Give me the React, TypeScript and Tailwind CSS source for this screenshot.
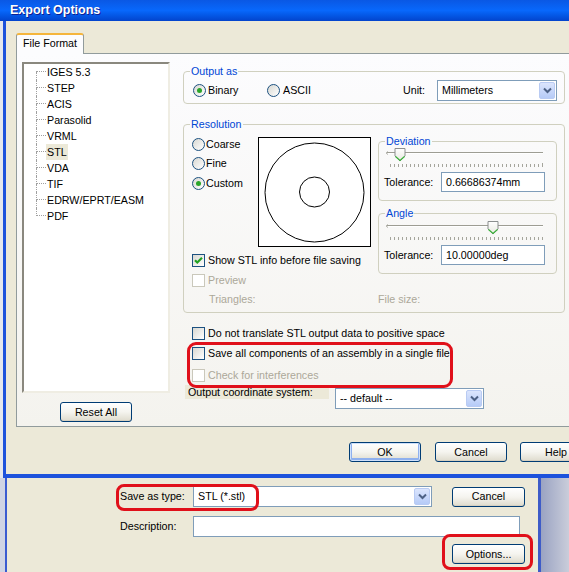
import React from "react";

function Radio({ checked }: { checked?: boolean }) {
  return (
    <span className="w-[13px] h-[13px] shrink-0 rounded-full border border-[#1c5180] bg-gradient-to-br from-[#d8d8d2] to-white flex items-center justify-center">
      {checked && <span className="w-[5px] h-[5px] rounded-full bg-[#2aa52a]" />}
    </span>
  );
}

function Check({ checked, disabled }: { checked?: boolean; disabled?: boolean }) {
  if (disabled) return <span className="w-[13px] h-[13px] shrink-0 border border-[#cac8bb] bg-white" />;
  return (
    <span className="w-[13px] h-[13px] shrink-0 border border-[#1c5180] bg-gradient-to-br from-[#d8d8d2] to-white flex items-center justify-center">
      {checked && (
        <svg width="11" height="11" viewBox="0 0 11 11">
          <path d="M2 5.2 L4.3 7.5 L9 2.8" stroke="#21a121" strokeWidth="2.2" fill="none" />
        </svg>
      )}
    </span>
  );
}

function Btn({ children, wide, def }: { children: React.ReactNode; wide?: boolean; def?: boolean }) {
  return (
    <div
      className={`${wide ? "w-[73px]" : "w-[72px]"} h-[20px] shrink-0 rounded-[3px] border border-[#003c74] bg-gradient-to-b from-white via-[#f5f4ef] to-[#dedbcd] flex items-center justify-center ${def ? "shadow-[inset_0_0_0_1px_#cee0fb,inset_0_-1px_0_2px_#8fb0ee]" : "shadow-[inset_0_-1px_0_0_#d6d0c0]"}`}
    >
      {children}
    </div>
  );
}

function DropBtn() {
  return (
    <span className="w-[16px] h-[17px] shrink-0 rounded-[2px] border border-[#b9cbf3] bg-gradient-to-b from-[#dbe5fd] to-[#b6cbf7] flex items-center justify-center">
      <svg width="9" height="7" viewBox="0 0 9 7">
        <path d="M1 1.5 L4.5 5 L8 1.5" stroke="#4d6185" strokeWidth="2" fill="none" />
      </svg>
    </span>
  );
}

function Select({ value, cls }: { value: string; cls: string }) {
  return (
    <div className={`h-[21px] shrink-0 border border-[#7f9db9] bg-white flex items-center justify-between pl-[4px] pr-[1px] ${cls}`}>
      <span className="leading-[13px]">{value}</span>
      <DropBtn />
    </div>
  );
}

function Slider({ pos, bigLast }: { pos: number; bigLast?: boolean }) {
  const ticks = Array.from({ length: 39 }, (_, i) => 6.5 + i * 4);
  return (
    <svg width="164" height="22" viewBox="0 0 164 22" className="block">
      <path d="M3 5.5 H159" stroke="#9d9d93" strokeWidth="1" />
      <path d="M3 6.5 H159" stroke="#ffffff" strokeWidth="1" />
      <path d="M3.5 4.5 Q1.5 6 3.5 7.5" stroke="#9d9d93" fill="none" />
      {ticks.map((x, i) => (
        <rect key={i} x={x - 0.5} y={bigLast && i === ticks.length - 1 ? 16 : 17} width="1" height={bigLast && i === ticks.length - 1 ? 4 : 3} fill="#a5a59c" />
      ))}
      <defs>
        <linearGradient id="th" x1="0" y1="0" x2="0" y2="1">
          <stop offset="0" stopColor="#ffffff" />
          <stop offset="1" stopColor="#e8e8e0" />
        </linearGradient>
      </defs>
      <path d={`M${pos - 5} 1.5 H${pos + 5} V9 L${pos} 14 L${pos - 5} 9 Z`} fill="url(#th)" stroke="#8b8e8e" strokeWidth="1" />
      <path d={`M${pos - 4.5} 9.5 L${pos} 13.5 L${pos + 4.5} 9.5`} stroke="#3cb03c" strokeWidth="1.2" fill="none" />
    </svg>
  );
}

function TreeRow({ label, first, last, sel }: { label: string; first?: boolean; last?: boolean; sel?: boolean }) {
  return (
    <div className="h-[16px] flex items-stretch">
      <div className="ml-[12px] w-[10px] flex flex-col">
        <div className={`h-[8px] border-b border-dotted border-b-[#a0a0a0] ${first ? "" : "border-l border-l-[#a0a0a0]"}`} />
        <div className={`h-[8px] ${last ? "" : "border-l border-dotted border-l-[#a0a0a0]"}`} />
      </div>
      <div className="flex items-center">
        <span className={`px-[1px] leading-[16px] ${sel ? "bg-[#ece9d8]" : ""}`}>{label}</span>
      </div>
    </div>
  );
}

function Legend({ children }: { children: React.ReactNode }) {
  return <legend className="ml-[6px] px-[1px] leading-[13px] text-[#0046d5]">{children}</legend>;
}

export default function App() {
  const tree = ["IGES 5.3", "STEP", "ACIS", "Parasolid", "VRML", "STL", "VDA", "TIF", "EDRW/EPRT/EASM", "PDF"];
  return (
    <div className="relative w-[569px] h-[572px] overflow-hidden flex flex-col text-[10.7px] leading-[13px] text-black font-['Liberation_Sans',Arial,sans-serif]">
      {/* Export Options window */}
      <div className="h-[478px] shrink-0 flex flex-col">
        <div className="h-[21px] shrink-0 bg-gradient-to-b from-[#0a58e4] via-[#0868fc] to-[#0344cc] flex items-center pl-[10px] text-white font-bold text-[12.5px] [text-shadow:1px_1px_0_#0f2090]">
          Export Options
        </div>
        <div className="flex flex-1 min-h-0">
          <div className="w-[3px] bg-[#e4e7ee]" />
          <div className="flex-1 min-w-0 border-l-[3px] border-b-[4px] border-[#1d52dc] bg-[#ece9d8] pl-[10px] pt-[12px] flex flex-col">
            {/* tab header */}
            <div className="w-[68px] h-[21px] -mb-px relative z-10 rounded-t-[3px] border border-b-0 border-[#919b9c] border-t-[2px] border-t-[#f5b53c] bg-[#fcfcfe] pl-[6px] pt-[2px]">
              File Format
            </div>
            {/* tab panel */}
            <div className="h-[374px] -mr-[20px] border border-[#919b9c] bg-gradient-to-b from-[#fcfcfe] to-[#f4f3ee] flex">
              {/* left column */}
              <div className="ml-[5px] mt-[8px] w-[148px] flex flex-col">
                <div className="h-[331px] bg-white border-2 border-t-[#8a887e] border-l-[#8a887e] border-r-[#efede3] border-b-[#efede3]">
                  {tree.map((t, i) => (
                    <TreeRow key={t} label={t} first={i === 0} last={i === tree.length - 1} sel={t === "STL"} />
                  ))}
                </div>
                <div className="mt-[9px] ml-[38px]">
                  <Btn>Reset All</Btn>
                </div>
              </div>
              {/* right column */}
              <div className="ml-[13px] w-[382px] pt-[11px] flex flex-col">
                <fieldset className="border border-[#d0d0bf] rounded-[4px]">
                  <Legend>Output as</Legend>
                  <div className="mt-[2px] mb-[2px] h-[21px] pl-[9px] flex items-center">
                    <div className="w-[74px] flex items-center gap-[2px]">
                      <Radio checked />
                      <span>Binary</span>
                    </div>
                    <div className="w-[136px] flex items-center gap-[3px]">
                      <Radio />
                      <span>ASCII</span>
                    </div>
                    <span className="w-[34px]">Unit:</span>
                    <Select value="Millimeters" cls="w-[120px]" />
                  </div>
                </fieldset>

                <fieldset className="mt-[14px] border border-[#d0d0bf] rounded-[4px]">
                  <Legend>Resolution</Legend>
                  <div className="flex pb-[5px]">
                    <div className="w-[194px] pl-[8px] flex flex-col">
                      <div className="flex items-start">
                        <div className="w-[66px] pt-[3.5px] flex flex-col">
                          {["Coarse", "Fine", "Custom"].map((r) => (
                            <div key={r} className="h-[19.5px] flex items-center gap-[1px]">
                              <Radio checked={r === "Custom"} />
                              <span>{r}</span>
                            </div>
                          ))}
                        </div>
                        <div className="mt-[6px] w-[113px] h-[110px] border border-black bg-white">
                          <svg width="111" height="108" viewBox="0 0 111 108" className="block">
                            <circle cx="55.5" cy="54.5" r="49.5" fill="none" stroke="#000" strokeWidth="1" />
                            <circle cx="55.5" cy="54" r="15" fill="none" stroke="#000" strokeWidth="1" />
                          </svg>
                        </div>
                      </div>
                      <div className="mt-[5px] h-[16px] flex items-center gap-[3px]">
                        <Check checked />
                        <span>Show STL info before file saving</span>
                      </div>
                      <div className="mt-[4px] h-[16px] flex items-center gap-[3px] text-[#aca899]">
                        <Check disabled />
                        <span>Preview</span>
                      </div>
                      <div className="mt-[3px] h-[16px] flex items-center pl-[17px] text-[#aca899]">Triangles:</div>
                    </div>
                    <div className="w-[179px] pt-[4px] flex flex-col">
                      <fieldset className="border border-[#d0d0bf] rounded-[4px]">
                        <Legend>Deviation</Legend>
                        <div className="pl-[5px] pb-[8px] flex flex-col">
                          <div className="-mt-[1px]">
                            <Slider pos={16} bigLast />
                          </div>
                          <div className="mt-[3px] h-[20px] flex items-center">
                            <span className="w-[57px]">Tolerance:</span>
                            <div className="w-[104px] h-[20px] border border-[#7f9db9] bg-white flex items-center pl-[4px]">0.66686374mm</div>
                          </div>
                        </div>
                      </fieldset>
                      <fieldset className="mt-[6px] border border-[#d0d0bf] rounded-[4px]">
                        <Legend>Angle</Legend>
                        <div className="pl-[5px] pb-[8px] flex flex-col">
                          <Slider pos={109} />
                          <div className="mt-[3px] h-[20px] flex items-center">
                            <span className="w-[57px]">Tolerance:</span>
                            <div className="w-[104px] h-[20px] border border-[#7f9db9] bg-white flex items-center pl-[4px]">10.00000deg</div>
                          </div>
                        </div>
                      </fieldset>
                      <div className="mt-[17px] h-[16px] flex items-center text-[#aca899]">File size:</div>
                    </div>
                  </div>
                </fieldset>

                <div className="pl-[9px] flex flex-col">
                  <div className="mt-[12px] h-[16px] flex items-center gap-[3px]">
                    <Check />
                    <span>Do not translate STL output data to positive space</span>
                  </div>
                  <div className="mt-[4px] h-[16px] flex items-center gap-[3px]">
                    <Check />
                    <span>Save all components of an assembly in a single file</span>
                  </div>
                  <div className="mt-[6px] h-[16px] flex items-center gap-[3px] text-[#aca899]">
                    <Check disabled />
                    <span>Check for interferences</span>
                  </div>
                </div>
                <div className="mt-[2px] ml-[2px] flex items-start">
                  <div className="w-[144px] h-[14px] bg-[#ece9d8] pl-[3px] leading-[14px]">Output coordinate system:</div>
                  <div className="ml-[6px] mt-[3px]">
                    <Select value="-- default --" cls="w-[149px]" />
                  </div>
                </div>
              </div>
            </div>
            {/* dialog buttons */}
            <div className="mt-[15px] ml-[333px] flex">
              <Btn def>OK</Btn>
              <div className="ml-[14px]">
                <Btn>Cancel</Btn>
              </div>
              <div className="ml-[13px]">
                <Btn>Help</Btn>
              </div>
            </div>
          </div>
        </div>
      </div>

      {/* underlying Save dialog */}
      <div className="flex-1 flex">
        <div className="w-[5px] bg-[#cfd4e4]" />
        <div className="w-[533px] border-l-2 border-[#3a5bd0] bg-[#ece9d8] pt-[8px] flex flex-col">
          <div className="h-[21px] flex items-center">
            <span className="ml-[113px] w-[73px]">Save as type:</span>
            <Select value="STL (*.stl)" cls="w-[239px]" />
            <div className="ml-[20px]">
              <Btn wide>Cancel</Btn>
            </div>
          </div>
          <div className="mt-[9px] h-[21px] flex items-center">
            <span className="ml-[113px] w-[73px]">Description:</span>
            <div className="w-[327px] h-[21px] border border-[#7f9db9] bg-white" />
          </div>
          <div className="mt-[7px] ml-[445px]">
            <Btn wide>Options...</Btn>
          </div>
        </div>
        <div className="w-[3px] bg-[#3d5bc8]" />
        <div className="flex-1 bg-gradient-to-r from-[#9aa3c2] to-[#cacdda]" />
      </div>

      {/* red annotation marks */}
      <div className="absolute left-[187px] top-[342px] w-[266px] h-[46px] rounded-[9px] border-[3px] border-[#e0101a]" />
      <div className="absolute left-[116px] top-[484px] w-[143px] h-[27px] rounded-[8px] border-[3px] border-[#e0101a]" />
      <div className="absolute left-[442px] top-[534px] w-[91px] h-[36px] rounded-[8px] border-[3px] border-[#e0101a]" />
    </div>
  );
}
